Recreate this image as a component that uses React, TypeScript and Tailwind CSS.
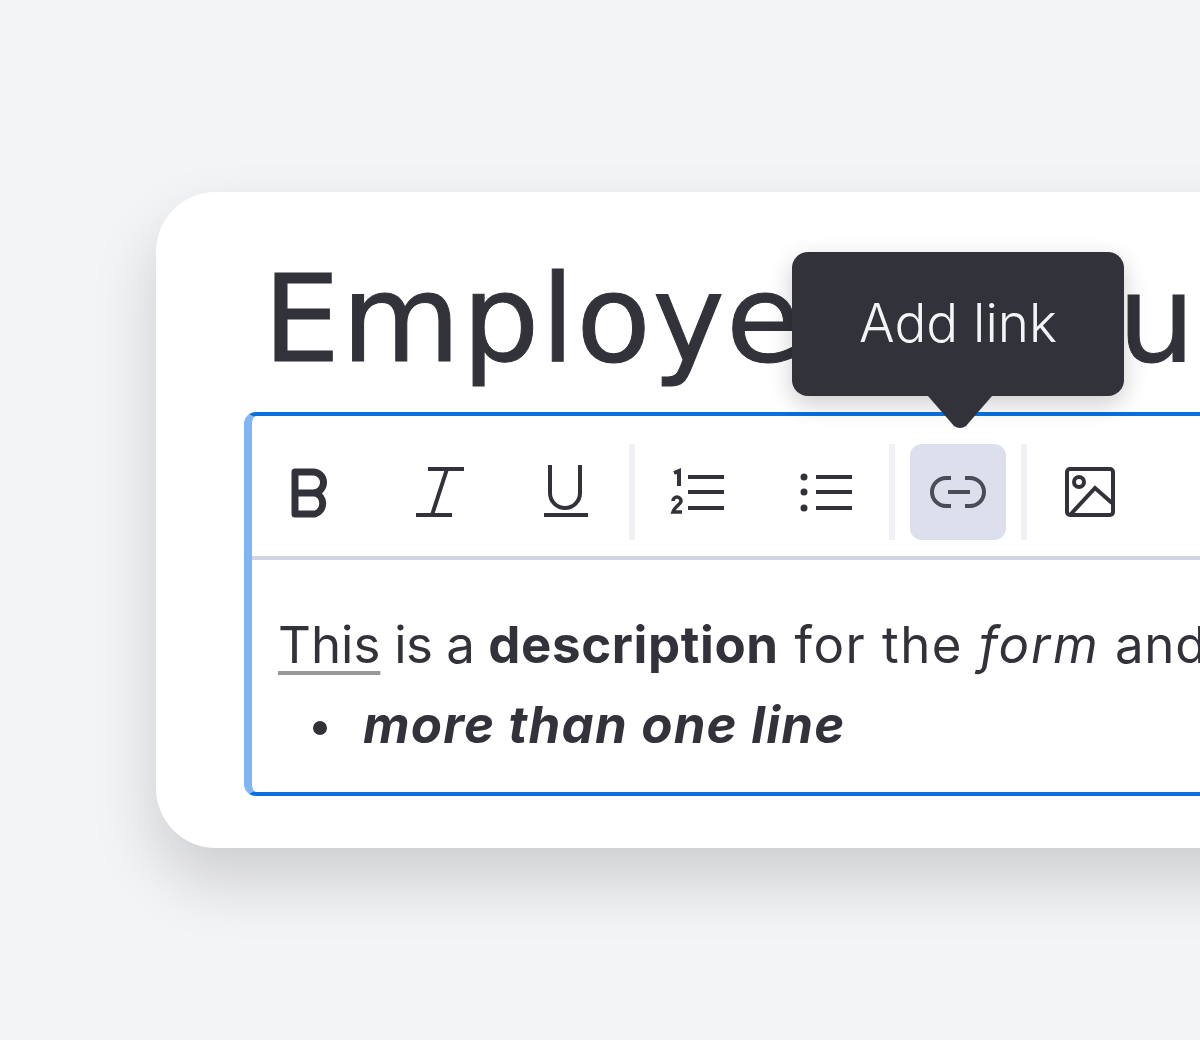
const ink = "#32333a";
const iconClass = "w-[96px] h-[96px] blur-[0.5px]";

function IconBold() {
  return (
    <svg viewBox="0 0 96 96" className={iconClass} fill="none" stroke={ink} strokeWidth="7" strokeLinejoin="round">
      <path d="M33 28H51a10.500 10.500 0 0 1 0 21H33ZM33 49H53a11 11 0 0 1 0 21H33Z" />
    </svg>
  );
}

function IconItalic() {
  return (
    <svg viewBox="0 0 96 96" className={iconClass} fill="none" stroke={ink} strokeWidth="4">
      <path d="M38 25H74M26 71H62M57 25L42 71" />
    </svg>
  );
}

function IconUnderline() {
  return (
    <svg viewBox="0 0 96 96" className={iconClass} fill="none" stroke={ink} strokeWidth="4">
      <path d="M32 21V49a15 15 0 0 0 30 0V21M26 71H70" />
    </svg>
  );
}

function IconOrdered() {
  return (
    <svg viewBox="0 0 96 96" className={iconClass} fill="none" stroke={ink} strokeWidth="4">
      <path d="M38 33H74M38 48H74M38 64H74" />
      <path d="M24 29L29 27V42" strokeWidth="4" />
      <path d="M23 57a4 4 0 0 1 8 0c0 3-6 5-8 11H32" strokeWidth="3.500" />
    </svg>
  );
}

function IconBullets() {
  return (
    <svg viewBox="0 0 96 96" className={iconClass} fill="none" stroke={ink} strokeWidth="4">
      <path d="M38 33H74M38 48H74M38 64H74" />
      <circle cx="26" cy="33" r="3.500" fill={ink} stroke="none" />
      <circle cx="26" cy="48" r="3.500" fill={ink} stroke="none" />
      <circle cx="26" cy="64" r="3.500" fill={ink} stroke="none" />
    </svg>
  );
}

function IconLink() {
  return (
    <svg viewBox="0 0 96 96" className={iconClass} fill="none" stroke="#4a4c58" strokeWidth="4">
      <path d="M41 34H36a14 14 0 0 0 0 28H41M55 34H60a14 14 0 0 1 0 28H55M38 48H60" />
    </svg>
  );
}

function IconImage() {
  return (
    <svg viewBox="0 0 96 96" className={iconClass} fill="none" stroke={ink} strokeWidth="4">
      <rect x="25" y="25" width="46" height="46" rx="3" />
      <circle cx="37" cy="38" r="5" />
      <path d="M28 71L53 44L70 59" />
    </svg>
  );
}

function ToolButton({ active, children }: { active?: boolean; children: React.ReactNode }) {
  return (
    <button className={active ? "w-[96px] h-[96px] rounded-[12px] bg-[#dcdfec] flex items-center justify-center" : "w-[96px] h-[96px] rounded-[12px] flex items-center justify-center"}>
      {children}
    </button>
  );
}

function Sep() {
  return <div className="w-[6px] h-[96px] bg-[#f0f1f4] mx-[15px]" />;
}

export default function App() {
  return (
    <div className="relative h-[1040px] w-[1200px] overflow-hidden bg-[#f3f4f6] pt-[192px] pl-[156px] font-['Inter',sans-serif] text-[#32333a]">
      <div className="w-[1400px] h-[656px] rounded-[60px] bg-white shadow-[0_32px_64px_rgba(0,0,0,0.16)] pl-[88px] pt-[34px]">
        <h1 className="pl-[19px] font-['DejaVu_Sans',sans-serif] text-[122px] leading-[186px] font-normal tracking-[1.500px] whitespace-nowrap blur-[0.5px] [word-spacing:-23px] [-webkit-text-stroke:1px_#32333a]">Employee Group</h1>

        <div className="w-[1300px] h-[384px] border-y-4 border-y-[#0b6fe0] border-l-[8px] border-l-[#7fb6f5] rounded-l-[12px]">
          <div className="flex items-center h-[140px] pt-[12px] pl-[10px]">
            <div className="flex gap-[32px]">
              <ToolButton><IconBold /></ToolButton>
              <ToolButton><IconItalic /></ToolButton>
              <ToolButton><IconUnderline /></ToolButton>
            </div>
            <Sep />
            <div className="flex gap-[32px]">
              <ToolButton><IconOrdered /></ToolButton>
              <ToolButton><IconBullets /></ToolButton>
            </div>
            <Sep />
            <ToolButton active><IconLink /></ToolButton>
            <Sep />
            <ToolButton><IconImage /></ToolButton>
          </div>
          <div className="h-[4px] bg-[#cfd3e3]" />
          <div className="pl-[26px] pt-[45px] text-[51px] leading-[80px] whitespace-nowrap blur-[0.5px]">
            <p className="tracking-[0.800px]">
              <span className="tracking-[0px] underline decoration-[4px] decoration-[#999999] underline-offset-[8px]">This</span>
              <span className="tracking-[-0.500px]"> is a </span>
              <b className="font-bold tracking-[0.600px]">description</b>
              <span className="tracking-[1.500px]"> for the </span>
              <i className="tracking-[2px]">form</i> and it can span
            </p>
            <ul className="flex items-center">
              <li className="w-[14px] h-[14px] rounded-full bg-[#32333a] ml-[35px] mr-[36px] mt-[6px]" />
              <li className="font-bold italic tracking-[1.200px]">more than one line</li>
            </ul>
          </div>
        </div>
      </div>

      <div className="absolute left-[792px] top-[252px] w-[332px] h-[144px] rounded-[16px] bg-[#32333a] shadow-[0_8px_24px_rgba(0,0,0,0.2)] flex items-center justify-center text-[#f3f4f6] text-[53px] font-light">
        <span className="blur-[0.5px]">Add link</span>
        <svg viewBox="0 0 64 32" className="absolute left-[136px] top-[144px] w-[64px] h-[32px]">
          <path d="M0 0H64L38 30Q32 34 26 30Z" fill="#32333a" />
        </svg>
      </div>
    </div>
  );
}
